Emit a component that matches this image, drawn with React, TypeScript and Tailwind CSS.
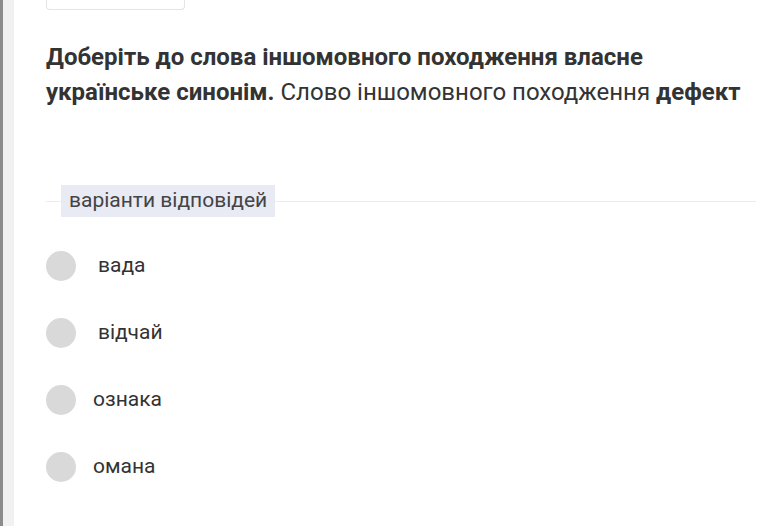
import React from 'react'

const options = [
  { text: 'вада', indent: true },
  { text: 'відчай', indent: true },
  { text: 'ознака', indent: false },
  { text: 'омана', indent: false },
]

export default function App() {
  return (
    <div
      className="w-[775px] h-[526px] flex bg-white overflow-hidden"
      style={{ fontFamily: 'Roboto, "Noto Sans", sans-serif' }}
    >
      {/* left edge */}
      <div className="w-[3px] bg-[#8c8c8c]" />
      <div className="w-[11px] bg-[#f1f1f1]" />

      <div className="flex-1 pl-[32px] pr-[19px]">
        {/* top stub of previous card */}
        <div className="w-[139px] h-[10px] border border-t-0 border-[#e4e4e4] rounded-b-[4px]" />

        {/* question */}
        <p className="mt-[30px] text-[24px] leading-[35px] text-[#333]">
          <b className="font-bold">Доберіть до слова іншомовного походження власне українське синонім.</b>{' '}
          Слово іншомовного походження <b className="font-bold">дефект</b>
        </p>

        {/* legend */}
        <div className="mt-[75px] flex items-center">
          <div className="w-[15px] h-px bg-[#ececec]" />
          <div className="h-[32px] px-[8px] flex items-center bg-[#e8eaf4] text-[21px] text-[#444]">
            варіанти відповідей
          </div>
          <div className="flex-1 h-px bg-[#ececec]" />
        </div>

        {/* options */}
        <div className="mt-[34px] flex flex-col gap-[37px]">
          {options.map((o) => (
            <div key={o.text} className="flex items-center h-[30px]">
              <div className="w-[30px] h-[30px] rounded-full bg-[#d9d9d9]" />
              <span className={`text-[21px] text-[#333] ${o.indent ? 'ml-[22px]' : 'ml-[17px]'}`}>
                {o.text}
              </span>
            </div>
          ))}
        </div>
      </div>
    </div>
  )
}
